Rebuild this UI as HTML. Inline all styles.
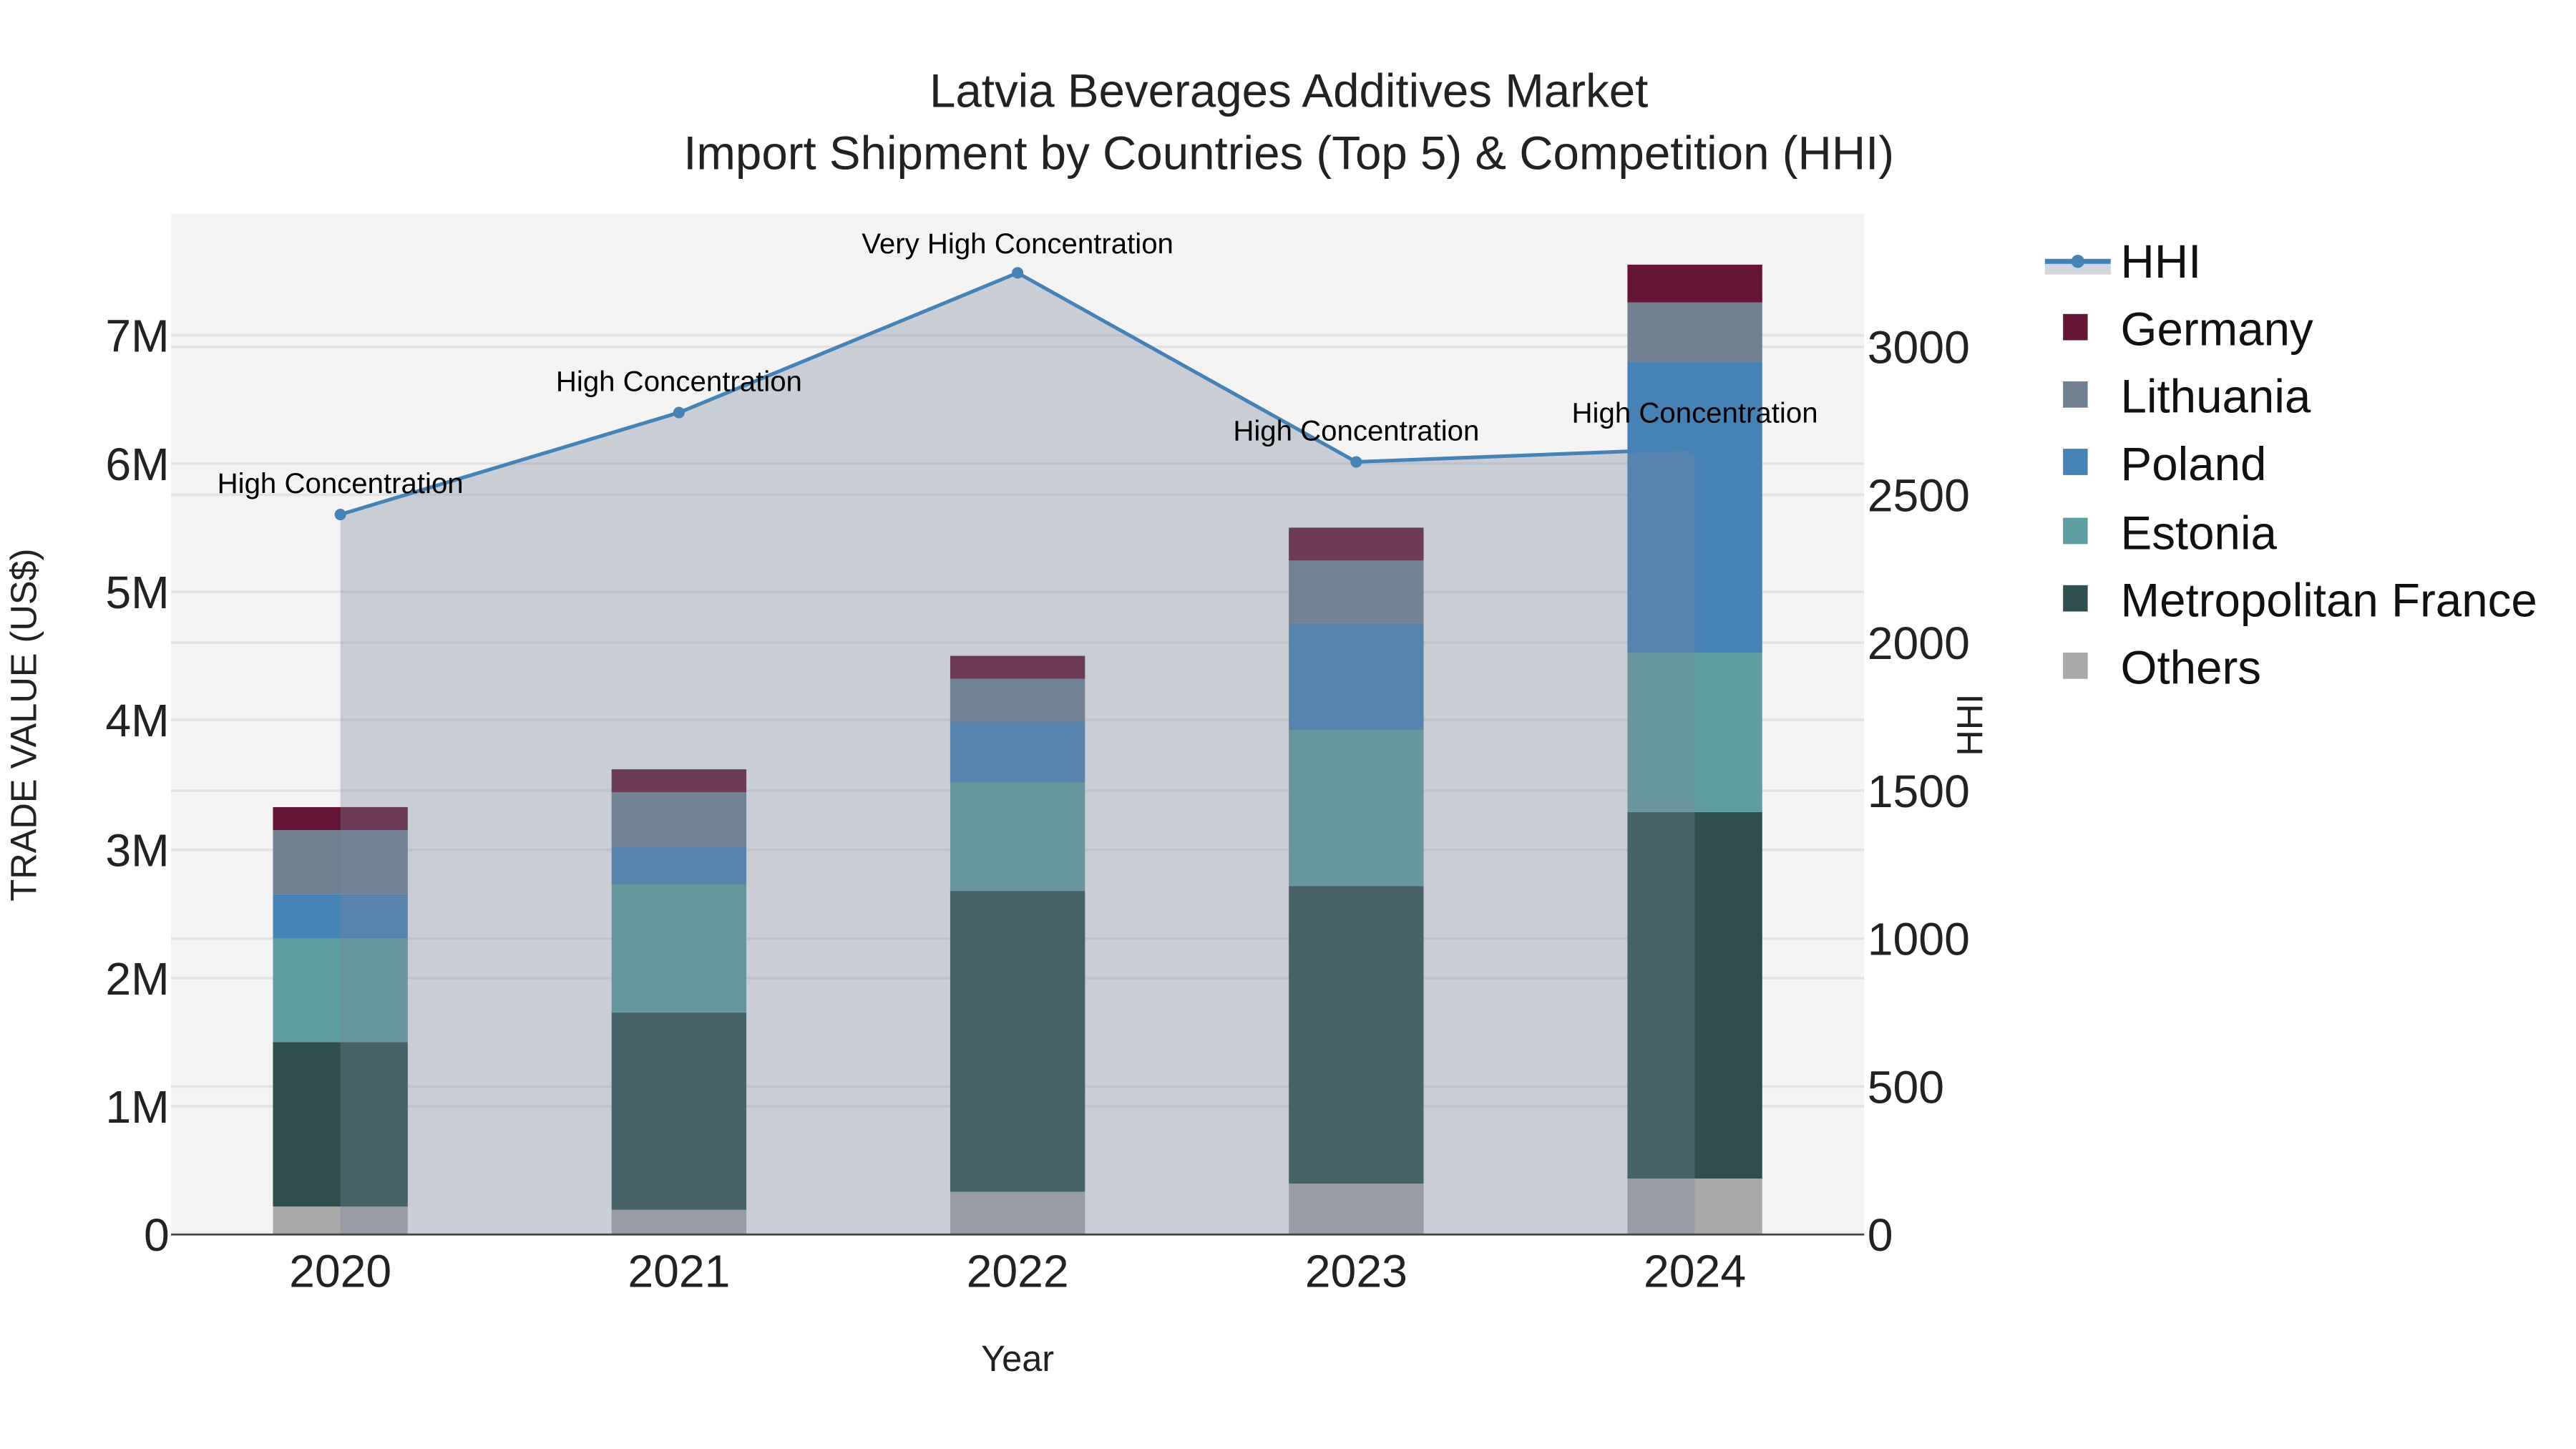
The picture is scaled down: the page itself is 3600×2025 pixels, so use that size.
<!DOCTYPE html>
<html><head><meta charset="utf-8"><style>html,body{margin:0;padding:0;background:#fff}svg{display:block}</style></head><body>
<svg width="3600" height="2025" viewBox="0 0 1567 881.5" xmlns="http://www.w3.org/2000/svg" font-family="Liberation Sans, sans-serif">
<rect width="1567" height="881.5" fill="#fff"/>
<rect x="104" y="130" width="1030" height="621" fill="#f3f3f3"/>
<g stroke="#e2e2e2" stroke-width="1.5">
<line x1="104" x2="1134" y1="673" y2="673"/><line x1="104" x2="1134" y1="595" y2="595"/><line x1="104" x2="1134" y1="517" y2="517"/><line x1="104" x2="1134" y1="438" y2="438"/><line x1="104" x2="1134" y1="360" y2="360"/><line x1="104" x2="1134" y1="282" y2="282"/><line x1="104" x2="1134" y1="204" y2="204"/>
<line x1="104" x2="1134" y1="661" y2="661"/><line x1="104" x2="1134" y1="571" y2="571"/><line x1="104" x2="1134" y1="481" y2="481"/><line x1="104" x2="1134" y1="391" y2="391"/><line x1="104" x2="1134" y1="301" y2="301"/><line x1="104" x2="1134" y1="211" y2="211"/>
</g>
<g>
<rect x="166" y="734" width="82" height="17" fill="#a9a9a9"/><rect x="166" y="634" width="82" height="100" fill="#2f4f4f"/><rect x="166" y="571" width="82" height="63" fill="#5f9ea0"/><rect x="166" y="544" width="82" height="27" fill="#4682b4"/><rect x="166" y="505" width="82" height="39" fill="#708090"/><rect x="166" y="491" width="82" height="14" fill="#651535"/>
<rect x="372" y="736" width="82" height="15" fill="#a9a9a9"/><rect x="372" y="616" width="82" height="120" fill="#2f4f4f"/><rect x="372" y="538" width="82" height="78" fill="#5f9ea0"/><rect x="372" y="515" width="82" height="23" fill="#4682b4"/><rect x="372" y="482" width="82" height="33" fill="#708090"/><rect x="372" y="468" width="82" height="14" fill="#651535"/>
<rect x="578" y="725" width="82" height="26" fill="#a9a9a9"/><rect x="578" y="542" width="82" height="183" fill="#2f4f4f"/><rect x="578" y="476" width="82" height="66" fill="#5f9ea0"/><rect x="578" y="439" width="82" height="37" fill="#4682b4"/><rect x="578" y="413" width="82" height="26" fill="#708090"/><rect x="578" y="399" width="82" height="14" fill="#651535"/>
<rect x="784" y="720" width="82" height="31" fill="#a9a9a9"/><rect x="784" y="539" width="82" height="181" fill="#2f4f4f"/><rect x="784" y="444" width="82" height="95" fill="#5f9ea0"/><rect x="784" y="379" width="82" height="65" fill="#4682b4"/><rect x="784" y="341" width="82" height="38" fill="#708090"/><rect x="784" y="321" width="82" height="20" fill="#651535"/>
<rect x="990" y="717" width="82" height="34" fill="#a9a9a9"/><rect x="990" y="494" width="82" height="223" fill="#2f4f4f"/><rect x="990" y="397" width="82" height="97" fill="#5f9ea0"/><rect x="990" y="220" width="82" height="177" fill="#4682b4"/><rect x="990" y="184" width="82" height="36" fill="#708090"/><rect x="990" y="161" width="82" height="23" fill="#651535"/>
</g>
<polygon points="207,313 413,251 619,166 825,281 1031,273 1031,751 207,751" fill="rgba(120,135,158,0.34)"/>
<polyline points="207,313 413,251 619,166 825,281 1031,273" fill="none" stroke="#4682b4" stroke-width="2.2"/>
<g fill="#4682b4"><circle cx="207" cy="313" r="3.5"/><circle cx="413" cy="251" r="3.5"/><circle cx="619" cy="166" r="3.5"/><circle cx="825" cy="281" r="3.5"/><circle cx="1031" cy="273" r="3.5"/></g>
<line x1="104" x2="1134" y1="751" y2="751" stroke="#444" stroke-width="1.2"/>
<g font-size="17.5" text-anchor="middle" fill="#000">
<text x="207" y="300">High Concentration</text><text x="413" y="238">High Concentration</text><text x="619" y="154">Very High Concentration</text><text x="825" y="268">High Concentration</text><text x="1031" y="257">High Concentration</text>
</g>
<g font-size="28" fill="#222" text-anchor="end">
<text x="103" y="761">0</text><text x="103" y="683">1M</text><text x="103" y="605">2M</text><text x="103" y="527">3M</text><text x="103" y="448">4M</text><text x="103" y="370">5M</text><text x="103" y="292">6M</text><text x="103" y="214">7M</text>
</g>
<g font-size="28" fill="#222" text-anchor="start">
<text x="1136" y="761">0</text><text x="1136" y="671">500</text><text x="1136" y="581">1000</text><text x="1136" y="491">1500</text><text x="1136" y="401">2000</text><text x="1136" y="311">2500</text><text x="1136" y="221">3000</text>
</g>
<g font-size="28" fill="#222" text-anchor="middle">
<text x="207" y="783">2020</text><text x="413" y="783">2021</text><text x="619" y="783">2022</text><text x="825" y="783">2023</text><text x="1031" y="783">2024</text>
</g>
<text x="619" y="834" font-size="22" text-anchor="middle" fill="#222">Year</text>
<text transform="translate(22,441) rotate(-90)" font-size="22" text-anchor="middle" fill="#222">TRADE VALUE (US$)</text>
<text transform="translate(1206,441) rotate(-90)" font-size="22" text-anchor="middle" fill="#222">HHI</text>
<g font-size="28.5" fill="#222" text-anchor="middle">
<text x="784" y="65">Latvia Beverages Additives Market</text>
<text x="784" y="103">Import Shipment by Countries (Top 5) &amp; Competition (HHI)</text>
</g>
<g font-size="28.5" fill="#111">
<rect x="1244" y="159" width="40" height="8" fill="#d1d6dd"/><line x1="1244" x2="1284" y1="159" y2="159" stroke="#4682b4" stroke-width="3"/><circle cx="1264" cy="159" r="4" fill="#4682b4"/>
<text x="1290" y="169">HHI</text>
<rect x="1255" y="191" width="15" height="16" fill="#651535"/><text x="1290" y="210">Germany</text>
<rect x="1255" y="232" width="15" height="16" fill="#708090"/><text x="1290" y="251">Lithuania</text>
<rect x="1255" y="273" width="15" height="16" fill="#4682b4"/><text x="1290" y="292">Poland</text>
<rect x="1255" y="315" width="15" height="16" fill="#5f9ea0"/><text x="1290" y="334">Estonia</text>
<rect x="1255" y="356" width="15" height="16" fill="#2f4f4f"/><text x="1290" y="375">Metropolitan France</text>
<rect x="1255" y="397" width="15" height="16" fill="#a9a9a9"/><text x="1290" y="416">Others</text>
</g>
</svg>
</body></html>
